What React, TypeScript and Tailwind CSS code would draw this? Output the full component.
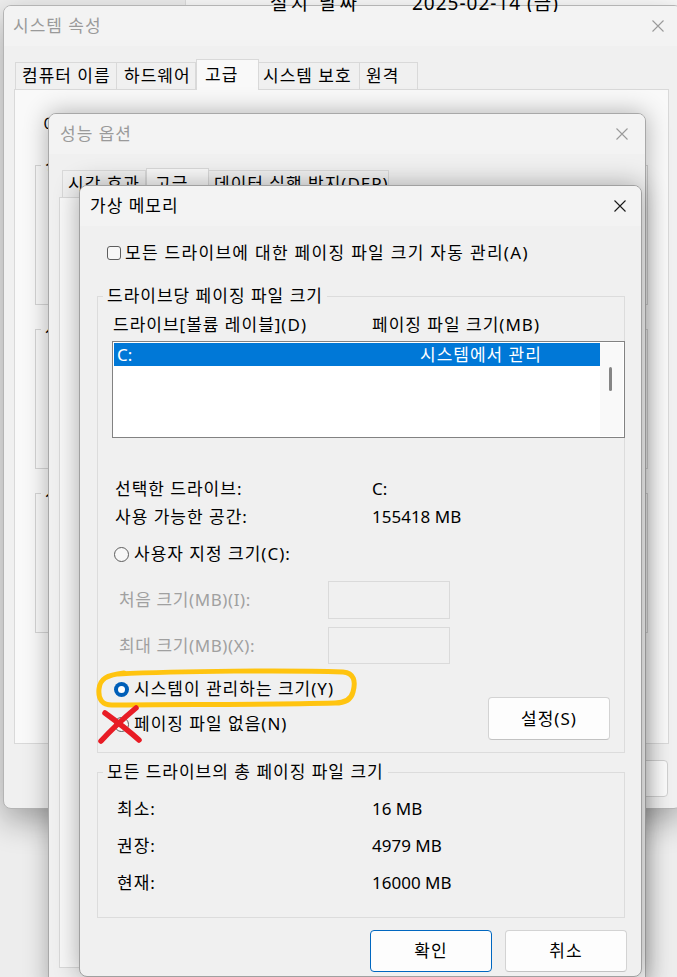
import React from "react";

const F = "font-['Noto_Sans','Noto_Sans_CJK_KR',sans-serif]";

function CloseIcon({ color }: { color: string }) {
  return (
    <svg width="12" height="12" viewBox="0 0 12 12" fill="none">
      <path d="M0.5 0.5L11.5 11.5M11.5 0.5L0.5 11.5" stroke={color} strokeWidth="1.1" />
    </svg>
  );
}

function Radio({ checked }: { checked?: boolean }) {
  if (checked) {
    return (
      <span className="w-[15px] h-[15px] shrink-0 rounded-full bg-[#005fb8] flex items-center justify-center">
        <span className="w-[7px] h-[7px] rounded-full bg-white" />
      </span>
    );
  }
  return <span className="w-[15px] h-[15px] shrink-0 rounded-full border border-[#5d5d5d] bg-[#f7f7f7]" />;
}

function Window1() {
  return (
    <div className="absolute isolate left-[3px] top-[5px] w-[679px] h-[804px] rounded-[8px] border border-[#b4b4b4] bg-[#f0f0f0] shadow-[0_12px_32px_rgba(0,0,0,0.32)] overflow-hidden">
      <div className="h-[40px] bg-[#f3f3f3] flex items-center justify-between pl-[9px] pr-[17px]">
        <span className="text-[17px] leading-[24px] text-[#9a9a9a]">시스템 속성</span>
        <CloseIcon color="#9a9a9a" />
      </div>
      <div className="mt-[13px] ml-[11px] h-[30px] flex items-end text-[17px] whitespace-nowrap">
        <div className="w-[102px] h-[27px] pl-[6px] flex items-center border border-b-0 border-[#d9d9d9] bg-[#f0f0f0]">컴퓨터 이름</div>
        <div className="w-[79px] h-[27px] pl-[7px] flex items-center border border-b-0 border-l-0 border-[#d9d9d9] bg-[#f0f0f0]">하드웨어</div>
        <div className="relative z-10 -mb-px w-[63px] h-[31px] pl-[8px] flex items-center border border-b-0 border-[#d9d9d9] bg-[#f9f9f9]">고급</div>
        <div className="w-[101px] h-[27px] pl-[4px] flex items-center border border-b-0 border-l-0 border-[#d9d9d9] bg-[#f0f0f0]">시스템 보호</div>
        <div className="w-[58px] h-[27px] pl-[6px] flex items-center border border-b-0 border-l-0 border-[#d9d9d9] bg-[#f0f0f0]">원격</div>
      </div>
      <div className="ml-[10px] w-[655px] h-[655px] border border-[#d9d9d9] bg-[#f9f9f9] text-[17px]">
        <div className="mt-[23px] pl-[28px] h-[24px] leading-[24px] whitespace-nowrap">
          이 변경 내용의 대부분을 적용하려면 관리자로 로그온해야 합니다.
        </div>
        <fieldset className="mt-[16px] ml-[20px] mr-[20px] h-[152px] border border-[#d5d5d5]">
          <legend className="ml-[5px] px-[4px] leading-[24px]">성능</legend>
        </fieldset>
        <fieldset className="mt-[12px] ml-[20px] mr-[20px] h-[152px] border border-[#d5d5d5]">
          <legend className="ml-[5px] px-[4px] leading-[24px]">사용자 프로필</legend>
        </fieldset>
        <fieldset className="mt-[12px] ml-[20px] mr-[20px] h-[152px] border border-[#d5d5d5]">
          <legend className="ml-[5px] px-[4px] leading-[24px]">시작 및 복구</legend>
        </fieldset>
      </div>
      <div className="mt-[16px] pr-[13px] flex justify-end gap-[10px] text-[17px]">
        <div className="w-[112px] h-[37px] rounded-[4px] border border-[#d0d0d0] bg-[#fbfbfb] flex items-center justify-center">확인</div>
        <div className="w-[112px] h-[37px] rounded-[4px] border border-[#d0d0d0] bg-[#fbfbfb] flex items-center justify-center">취소</div>
        <div className="w-[112px] h-[37px] rounded-[4px] border border-[#d0d0d0] bg-[#fbfbfb] flex items-center justify-center">적용(A)</div>
      </div>
    </div>
  );
}

function Window2() {
  return (
    <div className="absolute isolate left-[48px] top-[113px] w-[598px] h-[880px] rounded-[8px] border border-[#a8a8a8] bg-[#f0f0f0] shadow-[0_0_24px_rgba(0,0,0,0.3)] overflow-hidden">
      <div className="h-[40px] bg-[#f3f3f3] flex items-center justify-between pl-[11px] pr-[17px]">
        <span className="text-[17px] leading-[24px] text-[#9a9a9a]">성능 옵션</span>
        <CloseIcon color="#9a9a9a" />
      </div>
      <div className="mt-[14px] ml-[13px] h-[29px] flex items-end text-[17px] whitespace-nowrap">
        <div className="w-[84px] h-[27px] pl-[5px] flex items-center border border-b-0 border-[#d9d9d9] bg-[#f0f0f0]">시각 효과</div>
        <div className="relative z-10 -mb-px w-[63px] h-[30px] pl-[8px] pt-[1px] flex items-center border border-b-0 border-[#d9d9d9] bg-[#f9f9f9]">고급</div>
        <div className="w-[180px] h-[27px] pl-[5px] flex items-center border border-b-0 border-l-0 border-[#d9d9d9] bg-[#f0f0f0]">데이터 실행 방지(DEP)</div>
      </div>
      <div className="ml-[10px] w-[576px] h-[771px] border border-[#d9d9d9] bg-[#f9f9f9]" />
    </div>
  );
}

function Window3() {
  return (
    <div className="absolute isolate left-[79px] top-[185px] w-[563px] h-[792px] rounded-[8px] border border-[#a0a0a0] bg-[#f0f0f0] shadow-[0_0_26px_rgba(0,0,0,0.32)] overflow-hidden text-[17px]">
      <div className="h-[40px] bg-[#f3f3f3] flex items-center justify-between pl-[10px] pr-[15px]">
        <span className="leading-[24px]">가상 메모리</span>
        <CloseIcon color="#1a1a1a" />
      </div>
      <div className="pl-[17px] pr-[16px]">
        <div className="mt-[15px] ml-[10px] h-[24px] flex items-center gap-[4px]">
          <span className="w-[14px] h-[14px] shrink-0 rounded-[3px] border border-[#5d5d5d] bg-[#f7f7f7]" />
          <span className="whitespace-nowrap tracking-[1.3px]">모든 드라이브에 대한 페이징 파일 크기 자동 관리(A)</span>
        </div>

        <fieldset className="mt-[19px] border border-[#dcdcdc] pb-[12px]">
          <legend className="ml-[5px] px-[4px] leading-[24px]">드라이브당 페이징 파일 크기</legend>
          <div className="mt-[6px] h-[22px] pl-[15px] flex items-center">
            <span className="w-[259px] whitespace-nowrap">드라이브[볼륨 레이블](D)</span>
            <span className="whitespace-nowrap">페이징 파일 크기(MB)</span>
          </div>
          <div className="mt-[5px] ml-[14px] mr-[-1px] h-[97px] border border-[#828282] bg-white p-[1px] flex">
            <div className="flex-1">
              <div className="h-[23px] bg-[#0078d7] text-white flex items-center">
                <span className="w-[306px] pl-[3px] tracking-normal">C:</span>
                <span className="whitespace-nowrap">시스템에서 관리</span>
              </div>
            </div>
            <div className="w-[23px] bg-[#f9f9f9] pt-[24px] pl-[9px]">
              <div className="w-[3px] h-[24px] rounded-full bg-[#858585]" />
            </div>
          </div>

          <div className="mt-[37px] pl-[17px] h-[28px] flex items-center">
            <span className="w-[257px] whitespace-nowrap">선택한 드라이브:</span>
            <span className="tracking-normal">C:</span>
          </div>
          <div className="pl-[17px] h-[28px] flex items-center">
            <span className="w-[257px] whitespace-nowrap">사용 가능한 공간:</span>
            <span className="tracking-normal">155418 MB</span>
          </div>

          <div className="mt-[9px] pl-[16px] h-[28px] flex items-center gap-[5px]">
            <Radio />
            <span className="whitespace-nowrap">사용자 지정 크기(C):</span>
          </div>

          <div className="mt-[13px] pl-[21px] h-[38px] flex items-center text-[#a0a0a0]">
            <span className="w-[209px] whitespace-nowrap tracking-[0.6px]">처음 크기(MB)(I):</span>
            <span className="w-[122px] h-[38px] border border-[#dadada]" />
          </div>
          <div className="mt-[8px] pl-[21px] h-[37px] flex items-center text-[#a0a0a0]">
            <span className="w-[209px] whitespace-nowrap tracking-[0.6px]">최대 크기(MB)(X):</span>
            <span className="w-[122px] h-[37px] border border-[#dadada]" />
          </div>

          <div className="mt-[11px] flex justify-between items-end">
            <div className="pl-[16px] pb-[2px]">
              <div className="h-[28px] flex items-center gap-[5px]">
                <Radio checked />
                <span className="whitespace-nowrap">시스템이 관리하는 크기(Y)</span>
              </div>
              <div className="mt-[7px] h-[28px] flex items-center gap-[5px]">
                <Radio />
                <span className="whitespace-nowrap">페이징 파일 없음(N)</span>
              </div>
            </div>
            <div className="mr-[14px] w-[122px] h-[43px] rounded-[4px] border border-[#d3d3d3] border-b-[#c2c2c2] bg-[#fdfdfd] flex items-center justify-center">
              설정(S)
            </div>
          </div>
        </fieldset>

        <fieldset className="mt-[7px] border border-[#dcdcdc] pb-[20px]">
          <legend className="ml-[5px] px-[4px] leading-[24px]">모든 드라이브의 총 페이징 파일 크기</legend>
          <div className="mt-[11px] pl-[19px] h-[28px] flex items-center">
            <span className="w-[255px]">최소:</span>
            <span className="tracking-normal">16 MB</span>
          </div>
          <div className="mt-[9px] pl-[19px] h-[28px] flex items-center">
            <span className="w-[255px]">권장:</span>
            <span className="tracking-normal">4979 MB</span>
          </div>
          <div className="mt-[9px] pl-[19px] h-[28px] flex items-center">
            <span className="w-[255px]">현재:</span>
            <span className="tracking-normal">16000 MB</span>
          </div>
        </fieldset>

        <div className="mt-[12px] mr-[-2px] flex justify-end gap-[13px]">
          <div className="w-[122px] h-[42px] rounded-[4px] border border-[#0067c0] bg-[#fdfdfd] flex items-center justify-center">확인</div>
          <div className="w-[122px] h-[42px] rounded-[4px] border border-[#d3d3d3] border-b-[#c2c2c2] bg-[#fdfdfd] flex items-center justify-center">취소</div>
        </div>
      </div>
    </div>
  );
}

export default function App() {
  return (
    <div className={`relative w-[677px] h-[977px] overflow-hidden bg-[#ededed] text-black tracking-[1px] ${F}`}>
      <div className="absolute left-0 top-0 w-[677px] h-[60px] flex">
        <div className="w-[186px] h-full bg-[#eeeeee] border-r border-[#dedede]" />
        <div className="flex-1 h-full bg-[#fafafa]" />
      </div>
      <Window1 />
      <Window2 />
      <Window3 />
      <div className="absolute left-0 top-0 w-[677px] h-[12px] overflow-hidden">
        <div className="mt-[-9px] pl-[270px] flex text-[19px] leading-[24px] whitespace-nowrap">
          <span className="w-[142px] tracking-[3px]">설치 날짜</span>
          <span>2025-02-14 (금)</span>
        </div>
      </div>
      <svg className="absolute left-0 top-0 pointer-events-none" width="677" height="977" viewBox="0 0 677 977" fill="none">
        <path
          d="M118 674 C180 671, 290 670, 343 672 C354 673, 356 681, 353 692 C351 700, 345 703, 335 703 C260 705, 170 704, 112 705 C102 705, 98 699, 99 689 C100 679, 106 675, 124 673"
          stroke="#ffc410"
          strokeWidth="5"
          strokeLinecap="round"
        />
        <path d="M105 713 C116 721, 128 730, 139 740" stroke="#e81c25" strokeWidth="5.5" strokeLinecap="round" />
        <path d="M136 708 C124 718, 112 729, 101 741" stroke="#e81c25" strokeWidth="5.5" strokeLinecap="round" />
      </svg>
    </div>
  );
}
